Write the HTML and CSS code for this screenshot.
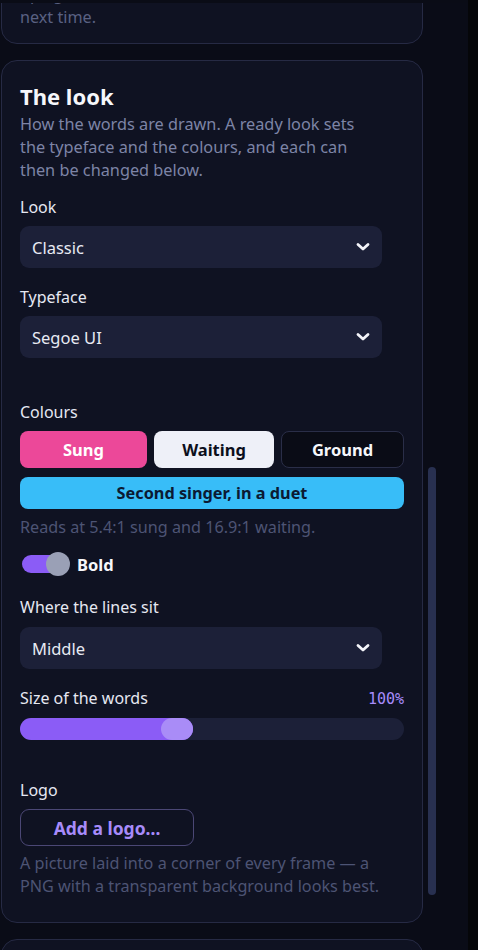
FILE: index.html
```html
<!DOCTYPE html>
<html lang="en">
<head>
<meta charset="utf-8">
<title>The look</title>
<link rel="stylesheet" href="styles.css">
</head>
<body>
<div class="app">
  <div class="panel">
    <div class="topfade"></div>
    <div class="stack">
      <section class="card card-prev">
        <p class="hint">Your choices are kept here, ready for you to pick up again<br>next time.</p>
      </section>

      <section class="card">
        <h2 class="title">The look</h2>
        <p class="desc">How the words are drawn. A ready look sets the typeface and the colours, and each can then be changed below.</p>

        <div class="field field-first">
          <label class="label">Look</label>
          <div class="select"><span>Classic</span>
            <svg class="chev" width="14" height="10" viewBox="0 0 14 10"><path d="M2 2.5 L7 7 L12 2.5" fill="none" stroke="#f4f5fa" stroke-width="2.8" stroke-linecap="round" stroke-linejoin="round"/></svg>
          </div>
        </div>

        <div class="field">
          <label class="label">Typeface</label>
          <div class="select"><span>Segoe UI</span>
            <svg class="chev" width="14" height="10" viewBox="0 0 14 10"><path d="M2 2.5 L7 7 L12 2.5" fill="none" stroke="#f4f5fa" stroke-width="2.8" stroke-linecap="round" stroke-linejoin="round"/></svg>
          </div>
        </div>

        <div class="field field-colours">
          <label class="label">Colours</label>
          <div class="swatches">
            <button class="swatch swatch-sung">Sung</button>
            <button class="swatch swatch-waiting">Waiting</button>
            <button class="swatch swatch-ground">Ground</button>
          </div>
          <button class="duet">Second singer, in a duet</button>
          <p class="hint hint-reads">Reads at 5.4:1 sung and 16.9:1 waiting.</p>
        </div>

        <div class="toggle-row">
          <span class="toggle"><span class="knob"></span></span>
          <span class="toggle-label">Bold</span>
        </div>

        <div class="field field-where">
          <label class="label">Where the lines sit</label>
          <div class="select"><span>Middle</span>
            <svg class="chev" width="14" height="10" viewBox="0 0 14 10"><path d="M2 2.5 L7 7 L12 2.5" fill="none" stroke="#f4f5fa" stroke-width="2.8" stroke-linecap="round" stroke-linejoin="round"/></svg>
          </div>
        </div>

        <div class="field">
          <div class="label-row"><label class="label">Size of the words</label><span class="value">100%</span></div>
          <div class="slider"><div class="fill" style="width:173px"><span class="thumb"></span></div></div>
        </div>

        <div class="field field-logo">
          <label class="label">Logo</label>
          <button class="logo-btn">Add a logo...</button>
          <p class="hint">A picture laid into a corner of every frame — a PNG with a transparent background looks best.</p>
        </div>
      </section>

      <section class="card card-next"></section>
    </div>
    <div class="scrollthumb"></div>
  </div>
  <div class="edge"></div>
</div>
</body>
</html>
```

FILE: styles.css
```css
* { box-sizing: border-box; }
html, body { margin: 0; padding: 0; }
body {
  background: #0a0c16;
  font-family: "Segoe UI", "Noto Sans", "Open Sans", sans-serif;
  color: #e6e8f2;
  height: 950px;
  overflow: hidden;
}
.app { display: flex; height: 950px; }
.panel {
  position: relative;
  width: 468px;
  background: #0a0c17;
  overflow: hidden;
}
.edge { flex: 1; background: #050609; }
.topfade {
  position: absolute; left: 0; top: 0; right: 0; height: 3px;
  background: #0a0c16; z-index: 2;
}
.stack {
  display: flex; flex-direction: column; gap: 16px;
  margin-left: 1px; width: 422px;
  margin-top: -61px;
}
.card {
  background: #0f1222;
  border: 1px solid #262a44;
  border-radius: 16px;
  padding: 21px 18px 24px 18px;
}
.card-prev { padding: 20px 18px 14px; }
.card-prev .hint { margin: 0; color: #5a6182; }
.card-next { height: 40px; }

.title {
  margin: 0; font-size: 22px; font-weight: 700; color: #f6f7fb; line-height: 28px;
}
.desc {
  margin: 3px 0 0; max-width: 350px; font-size: 16.3px; line-height: 23px; color: #7d84a6;
}
.field { margin-top: 18px; display: flex; flex-direction: column; }
.field-first { margin-top: 14px; }
.label { font-size: 16px; line-height: 22px; color: #e6e8f2; margin-bottom: 8px; }
.select {
  width: 362px; height: 42px; border-radius: 9px; background: #1c2038;
  display: flex; align-items: center; justify-content: space-between;
  padding: 0 12px 0 12px; font-size: 16.5px; color: #e8eaf3;
}
.chev { display: block; }

.field-colours { margin-top: 43px; }
.swatches { display: flex; gap: 7px; }
.swatch {
  flex: 1; height: 37px; border-radius: 8px; border: 1px solid transparent;
  font-family: inherit; font-size: 16.5px; font-weight: 700; padding: 0;
}
.swatch-sung { background: #ec4899; color: #ffffff; flex: 0 0 127px; }
.swatch-waiting { background: #eef0f8; color: #0c0f1c; flex: 0 0 120px; }
.swatch-ground { background: #0a0c16; color: #f6f7fb; border-color: #2a2e48; flex: 1; }
.duet {
  margin-top: 9px; height: 32px; border: 0; border-radius: 8px;
  background: #38bdf8; color: #0b1a33; font-family: inherit; font-size: 16.3px; font-weight: 700;
  width: 384px; padding: 0;
}
.hint { margin: 6px 0 0; font-size: 16.2px; line-height: 23px; color: #4d5474; }
.hint-reads { margin-top: 7px; }

.toggle-row { display: flex; align-items: center; margin-top: 13px; gap: 7px; padding-left: 2px; }
.toggle {
  position: relative; width: 48px; height: 24px; display: inline-block;
}
.toggle::before {
  content: ""; position: absolute; left: 0; top: 3px; width: 40px; height: 18px;
  border-radius: 9px; background: #8b5cf6;
}
.knob {
  position: absolute; left: 24px; top: 0; width: 24px; height: 24px; border-radius: 50%;
  background: #9aa0b6;
}
.toggle-label { font-size: 16.5px; font-weight: 700; color: #f6f7fb; }
.field-where { margin-top: 20px; }
.field-where .select { margin-top: 1px; }

.label-row { display: flex; justify-content: space-between; align-items: baseline; }
.value { font-family: "DejaVu Sans Mono", monospace; font-size: 15px; color: #a78bfa; }
.slider {
  width: 384px; height: 22px; border-radius: 11px; background: #1c2038; margin-top: 1px;
}
.fill {
  position: relative; height: 22px; border-radius: 11px; background: #8b5cf6;
}
.thumb {
  position: absolute; right: 0; top: 0; width: 32px; height: 22px; border-radius: 11px;
  background: #a98cf7;
}
.field-logo { margin-top: 39px; }
.logo-btn {
  width: 174px; height: 37px; border: 1px solid #4b4775; border-radius: 9px;
  background: transparent; color: #a78bfa; font-family: inherit; font-size: 17.5px; font-weight: 700;
  padding: 0;
}
.field-logo .hint { margin-top: 6px; max-width: 362px; }

.scrollthumb {
  position: absolute; left: 428px; top: 467px; width: 8px; height: 428px;
  border-radius: 4px; background: #283050;
}
```
